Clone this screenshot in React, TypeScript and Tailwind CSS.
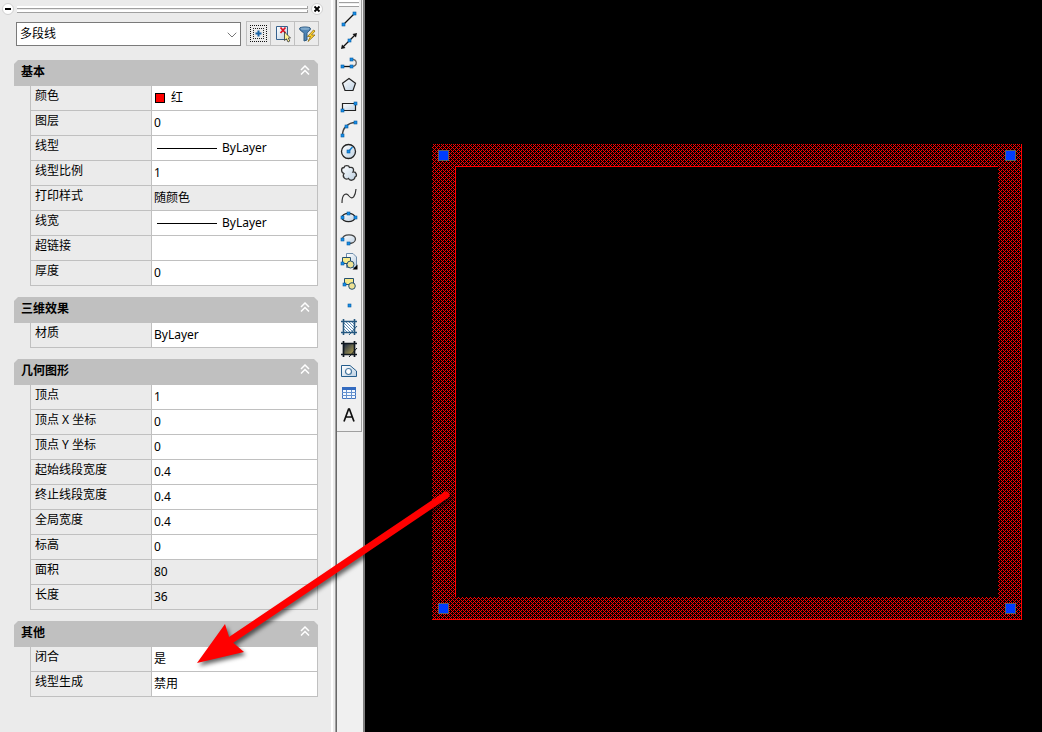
import type { ReactNode } from "react";
import { ChevronDown } from "lucide-react";

type Property = {
  label: string;
  value: string;
  kind?: "color" | "line";
  readOnly?: boolean;
};

const sections: { title: string; rows: Property[] }[] = [
  {
    title: "基本",
    rows: [
      { label: "颜色", value: "红", kind: "color" },
      { label: "图层", value: "0" },
      { label: "线型", value: "ByLayer", kind: "line" },
      { label: "线型比例", value: "1" },
      { label: "打印样式", value: "随颜色", readOnly: true },
      { label: "线宽", value: "ByLayer", kind: "line" },
      { label: "超链接", value: "" },
      { label: "厚度", value: "0" },
    ],
  },
  {
    title: "三维效果",
    rows: [{ label: "材质", value: "ByLayer" }],
  },
  {
    title: "几何图形",
    rows: [
      { label: "顶点", value: "1" },
      { label: "顶点 X 坐标", value: "0" },
      { label: "顶点 Y 坐标", value: "0" },
      { label: "起始线段宽度", value: "0.4" },
      { label: "终止线段宽度", value: "0.4" },
      { label: "全局宽度", value: "0.4" },
      { label: "标高", value: "0" },
      { label: "面积", value: "80", readOnly: true },
      { label: "长度", value: "36", readOnly: true },
    ],
  },
  {
    title: "其他",
    rows: [
      { label: "闭合", value: "是" },
      { label: "线型生成", value: "禁用" },
    ],
  },
];

// Blue node marker used by most of the draw icons
function Dot({ x, y }: { x: number; y: number }) {
  return <rect x={x - 1} y={y - 1} width="3" height="3" fill="#168ee8" stroke="#075a9e" strokeWidth="0.6" />;
}

const tools: { name: string; icon: ReactNode }[] = [
  {
    name: "直线",
    icon: (
      <>
        <path d="M3.5 14.5 14.5 3.5" stroke="#111" strokeWidth="1.3" />
        <Dot x={3} y={14} />
        <Dot x={14} y={3} />
      </>
    ),
  },
  {
    name: "构造线",
    icon: (
      <>
        <path d="M3 15 15.5 2.5" stroke="#111" strokeWidth="1.3" />
        <path d="M1 17 2 12.5 5.5 16ZM17 1 12.5 2 16 5.5Z" fill="#111" />
        <Dot x={9} y={8} />
      </>
    ),
  },
  {
    name: "多段线",
    icon: (
      <>
        <path d="M2.5 12.5H12" stroke="#111" strokeWidth="1.3" />
        <path d="M11.5 5.5C17.5 4.5 18 12 12 12.5" stroke="#666" strokeWidth="1.3" fill="none" />
        <Dot x={2} y={12} />
        <Dot x={11} y={12} />
        <Dot x={11} y={5} />
      </>
    ),
  },
  {
    name: "正多边形",
    icon: <path d="M9 2.5 15.5 7.3 13 14.5H5L2.5 7.3Z" fill="url(#shade)" stroke="#222" strokeWidth="1.2" />,
  },
  {
    name: "矩形",
    icon: (
      <>
        <path d="M2.5 5.5H15.5V12.5H2.5Z" fill="url(#shade)" stroke="#222" strokeWidth="1.2" />
        <Dot x={2} y={12} />
        <Dot x={15} y={5} />
      </>
    ),
  },
  {
    name: "圆弧",
    icon: (
      <>
        <path d="M2.5 15C2.5 8 8 2.5 15.5 2.5" stroke="#444" strokeWidth="1.4" fill="none" />
        <Dot x={2} y={15} />
        <Dot x={6} y={6} />
        <Dot x={15} y={2} />
      </>
    ),
  },
  {
    name: "圆",
    icon: (
      <>
        <circle cx="8.5" cy="9.5" r="7" fill="url(#shade)" stroke="#222" strokeWidth="1.3" />
        <path d="M8.5 9.5 12.5 5" stroke="#0879cb" strokeWidth="1.3" />
        <Dot x={8} y={9} />
      </>
    ),
  },
  {
    name: "修订云线",
    icon: (
      <path
        d="M4 9.5C.5 8 1 3.5 4 3.5C4.5 1 9 1 9.5 3.5C13 2.5 14.5 5.5 13 8C16.5 7.5 17.5 12 15 13C14.5 17 9.5 17 8.5 14.5C5 16.5 2 12.5 4 9.5Z"
        fill="url(#shade)"
        stroke="#333"
        strokeWidth="1.3"
      />
    ),
  },
  {
    name: "样条曲线",
    icon: <path d="M2 17C2 8 6 6 9 10C13 15 15.5 9 16 3" stroke="#333" strokeWidth="1.2" fill="none" />,
  },
  {
    name: "椭圆",
    icon: (
      <>
        <ellipse cx="8.5" cy="9.5" rx="6.5" ry="4.2" fill="url(#shade)" stroke="#222" strokeWidth="1.3" />
        <Dot x={2} y={9} />
        <Dot x={15} y={9} />
        <Dot x={8} y={5} />
      </>
    ),
  },
  {
    name: "椭圆弧",
    icon: (
      <>
        <path d="M2.5 9C3 3.5 15 3.5 15.5 9C15.5 12 12 13.5 8.5 13.5" fill="url(#shade)" stroke="#444" strokeWidth="1.3" />
        <Dot x={2} y={9} />
        <Dot x={8} y={13} />
      </>
    ),
  },
  {
    name: "插入块",
    icon: (
      <>
        <path d="M6.5 1.5H13L16.5 5V15.5H6.5Z" fill="url(#shade)" stroke="#6c8cab" />
        <path d="M2.5 5.5H10.5V11.5H2.5Z" fill="#f8ea8a" stroke="#24506f" />
        <circle cx="10.5" cy="12.5" r="3.5" fill="#eee294" stroke="#24506f" />
        <Dot x={2} y={11} />
        <path d="M17.5 12.5V17.5H12.5Z" fill="#000" />
      </>
    ),
  },
  {
    name: "创建块",
    icon: (
      <>
        <path d="M4.5 4.5H13.5V10.5H4.5Z" fill="#f8ea8a" stroke="#24506f" />
        <circle cx="12" cy="12" r="3.3" fill="#eee294" stroke="#24506f" />
        <Dot x={4} y={10} />
      </>
    ),
  },
  { name: "点", icon: <Dot x={9} y={9} /> },
  {
    name: "图案填充",
    icon: (
      <>
        <path d="M4 4H14V14H4Z" fill="#fff" />
        <path d="M4 11 7 14M4 8 10 14M4 5 13 14M6 4 14 12M9 4 14 9M12 4 14 6" stroke="#3f78aa" strokeWidth="0.8" />
        <path d="M3.5 1V17M14.5 1V17M1 3.5H17M1 14.5H17" stroke="#24577f" strokeWidth="1.6" />
        <path d="M9 17 17 8" stroke="#24577f" />
      </>
    ),
  },
  {
    name: "渐变色",
    icon: (
      <>
        <path d="M4 4H14V14H4Z" fill="url(#gold)" />
        <path d="M3.5 1V17M14.5 1V17M1 3.5H17M1 14.5H17" stroke="#101820" strokeWidth="1.7" />
        <path d="M9 17 17 8" stroke="#101820" />
      </>
    ),
  },
  {
    name: "面域",
    icon: (
      <>
        <path d="M1.5 3.5H10L16.5 9V14.5H1.5Z" fill="url(#shade)" stroke="#245d8c" />
        <circle cx="8.5" cy="9.5" r="3" fill="#fff" stroke="#45779f" strokeWidth="1.2" />
      </>
    ),
  },
  {
    name: "表格",
    icon: (
      <>
        <path d="M2.5 3.5H15.5V14.5H2.5Z" fill="#f4f9ff" stroke="#4475bd" />
        <path d="M2 3H16V6H2Z" fill="#336bc0" />
        <path d="M2 8.5H16M2 11.5H16M6.5 6V15M11.5 6V15" stroke="#6491ce" />
      </>
    ),
  },
  {
    name: "多行文字",
    icon: <path d="M4 15.5 8.6 3H9.4L14 15.5M5.8 11H12.2" stroke="#111" strokeWidth="1.7" fill="none" />,
  },
];

function PropertyValue({ row }: { row: Property }) {
  return (
    <div className="flex items-center">
      {row.kind === "color" && <span className="mr-1.5 ml-px size-2.5 border border-black bg-[#f00]" />}
      {row.kind === "line" && <span className="ml-[3px] mr-[5px] h-px w-[60px] bg-black" />}
      <span>{row.value}</span>
    </div>
  );
}

function Section({ title, rows }: { title: string; rows: Property[] }) {
  return (
    <section>
      <h2 className="flex h-[26px] items-center justify-between bg-[#c0c0c0] pr-2 pl-[7px] [clip-path:polygon(4px_0,calc(100%-4px)_0,100%_4px,100%_100%,0_100%,0_4px)]">
        <span className="pb-0.5 font-bold leading-4">{title}</span>
        <button aria-label={`折叠${title}`} className="mb-1.5">
          <svg width="10" height="10" viewBox="0 0 10 10" fill="none" stroke="#fff" strokeWidth="1.5">
            <path d="M1 5 5 1 9 5M1 9.5 5 5.5 9 9.5" />
          </svg>
        </button>
      </h2>
      <div className="pl-4">
        <table className="w-full table-fixed border-separate border-spacing-0 border-r border-[#c0c0c0] text-left">
          <tbody>
            {rows.map((row) => (
              <tr key={row.label} className="h-[25px]">
                <th
                  scope="row"
                  className="w-[121px] border-b border-l border-[#c0c0c0] pb-1 pl-1 align-middle font-normal leading-4"
                >
                  {row.label}
                </th>
                <td
                  className={`border-b border-l border-[#c0c0c0] pl-0.5 align-middle leading-4 ${row.readOnly ? "bg-[#ebebeb]" : "bg-white"}`}
                >
                  <PropertyValue row={row} />
                </td>
              </tr>
            ))}
          </tbody>
        </table>
      </div>
    </section>
  );
}

function PropertiesPalette() {
  return (
    <aside className="w-[331px] shrink-0 bg-[#ebebeb]">
      <div className="flex h-[18px] items-center gap-[3px] pl-0.5">
        <button
          aria-label="最小化"
          className="flex size-3 items-center justify-center rounded-full border border-[#d0d0d0] bg-white"
        >
          <span className="h-0.5 w-1.5 bg-black" />
        </button>
        <div className="flex w-[291px] flex-col gap-px">
          <span className="h-[3px] border-b border-r border-[#a0a0a0] bg-white" />
          <span className="h-[3px] border-b border-r border-[#a0a0a0] bg-white" />
        </div>
        <button
          aria-label="关闭"
          className="flex size-3 items-center justify-center rounded-full border border-[#d0d0d0] bg-white"
        >
          <svg width="8" height="8" viewBox="0 0 8 8">
            <path d="M1.5 1.5 6.5 6.5M6.5 1.5 1.5 6.5" stroke="#000" strokeWidth="1.8" />
          </svg>
        </button>
      </div>

      <div className="flex items-center gap-[5px] pt-[3px] pl-4">
        <div className="relative h-6 w-[225px]">
          <select
            aria-label="对象类型"
            className="h-6 w-full appearance-none border border-[#7a7a7a] bg-white pl-[3px] text-xs outline-none"
          >
            <option>多段线</option>
          </select>
          <ChevronDown size={16} strokeWidth={1.5} className="pointer-events-none absolute top-[5px] right-px text-[#777]" />
        </div>
        <div className="flex border-l border-[#c0c0c0]">
          <button
            aria-label="切换 PICKADD 系统变量的值"
            className="flex h-[25px] w-6 items-center justify-center border-y border-r border-[#c0c0c0]"
          >
            <svg width="17" height="17" viewBox="0 0 17 17" fill="none">
              <path d="M0 .5H17M0 16.5H17M.5 2V16M16.5 2V16" stroke="#111" strokeDasharray="1 1" />
              <path d="M3 3.5H14M3 13.5H14M3.5 5V13M13.5 5V13" stroke="#222" strokeDasharray="1 1" />
              <path d="M8.5 5.5V11.5M5.5 8.5H11.5" stroke="#1b64a6" strokeWidth="2" />
            </svg>
          </button>
          <button
            aria-label="选择对象"
            className="flex h-[25px] w-6 items-center justify-center border-y border-r border-[#c0c0c0]"
          >
            <svg width="18" height="18" viewBox="0 0 18 18">
              <path d="M2.5 1.5H13.5V14.5H2.5Z" fill="url(#shade)" stroke="#36628e" />
              <path d="M6.5 2.5 11.5 8M11.5 2.5 6.5 8" stroke="#e01020" strokeWidth="1.8" />
              <path d="M10.5 7V15.5L12.5 13.8 14 17 15.8 16 14.3 13H16.5Z" fill="#fff493" stroke="#333" strokeWidth="0.8" />
            </svg>
          </button>
          <button
            aria-label="快速选择"
            className="flex h-[25px] w-6 items-center justify-center border-y border-r border-[#c0c0c0]"
          >
            <svg width="18" height="18" viewBox="0 0 18 18">
              <path d="M1.5 3.5C1.5 1.5 12.5 1.5 12.5 3.5C12.5 6 9 7 9 8.5V15L6 16V8.5C6 7 1.5 6 1.5 3.5Z" fill="#4e83b5" stroke="#2b587f" />
              <ellipse cx="7" cy="3.7" rx="4.5" ry="1.2" fill="#7fa9cb" />
              <path d="M15.5 5 9.5 11.5H12.5L10 16.5 17 10H13.5L17 6Z" fill="#ffd22e" stroke="#8a6a10" strokeWidth="0.8" />
            </svg>
          </button>
        </div>
      </div>

      <div className="mt-3.5 mr-[13px] ml-3.5 flex flex-col gap-[11px]">
        {sections.map((section) => (
          <Section key={section.title} {...section} />
        ))}
      </div>
    </aside>
  );
}

function DrawToolbar() {
  return (
    <div className="flex shrink-0 bg-[#f0f0f0]">
      <div className="w-0.5 bg-white" />
      <div className="w-0.5 bg-[#ebebeb]" />
      <div className="w-0.5 border-l border-[#a0a0a0] bg-[#696969]" />
      <div className="border-r-2 border-[#808080] pr-px">
        <div role="toolbar" aria-label="绘图" className="flex flex-col items-center border-r border-b border-[#a0a0a0] pb-[5px]">
          <div className="flex h-2 w-5 flex-col gap-px">
            <span className="h-[3px] border-b border-[#a0a0a0] bg-white" />
            <span className="h-[3px] border-b border-[#a0a0a0] bg-white" />
          </div>
          {tools.map((tool) => (
            <button key={tool.name} aria-label={tool.name} className="flex h-[22px] w-6 items-center justify-center">
              <svg width="18" height="18" viewBox="0 0 18 18" fill="none">
                {tool.icon}
              </svg>
            </button>
          ))}
        </div>
      </div>
    </div>
  );
}

const grips = [
  [6, 6],
  [573, 6],
  [6, 459],
  [573, 459],
];

function Drawing() {
  return (
    <main className="min-w-0 flex-1 overflow-hidden bg-black pt-36 pl-[67px]">
      <svg width="590" height="476" viewBox="0 0 590 476" shapeRendering="crispEdges">
        <defs>
          <pattern id="selected" width="4" height="4" patternUnits="userSpaceOnUse">
            <path d="M1 0h1v1h-1zM3 0h1v1h-1zM2 1h1v1h-1zM1 2h1v1h-1zM3 2h1v1h-1zM0 3h1v1h-1z" fill="#f00" />
          </pattern>
        </defs>
        <path d="M0 0H590V476H0ZM24 23V453H566V23Z" fill="url(#selected)" fillRule="evenodd" />
        <path d="M23 22H565V23H24V453H23ZM589 0H590V476H0V475H589Z" fill="#f00" />
        {grips.map(([x, y]) => (
          <rect key={`${x}-${y}`} x={x + 0.5} y={y + 0.5} width="10" height="10" fill="#003cff" stroke="#606060" />
        ))}
      </svg>
    </main>
  );
}

export default function App() {
  return (
    <div className="relative flex min-h-screen bg-[#ebebeb] font-['Noto_Sans','Noto_Sans_CJK_SC',sans-serif] text-xs text-black">
      <svg width="0" height="0" className="absolute" aria-hidden="true">
        <defs>
          <linearGradient id="shade" x1="0" y1="0" x2="1" y2="1">
            <stop stopColor="#fff" />
            <stop offset="1" stopColor="#bdd0e2" />
          </linearGradient>
          <linearGradient id="gold" x1="0" y1="0" x2="1" y2="1">
            <stop stopColor="#1d2b45" />
            <stop offset="1" stopColor="#b5a452" />
          </linearGradient>
        </defs>
      </svg>
      <PropertiesPalette />
      <DrawToolbar />
      <Drawing />
      {/* Callout arrow from the polyline to the closed flag */}
      <svg
        width="270"
        height="190"
        viewBox="190 485 270 190"
        className="pointer-events-none absolute top-[485px] left-[190px] drop-shadow-[2px_3px_2px_rgba(0,0,0,0.6)]"
      >
        <path d="M446 495 228 642" stroke="#f00" strokeWidth="7" strokeLinecap="round" />
        <path d="M197 663 225 624 230 640 244 652Z" fill="#f00" />
      </svg>
    </div>
  );
}
